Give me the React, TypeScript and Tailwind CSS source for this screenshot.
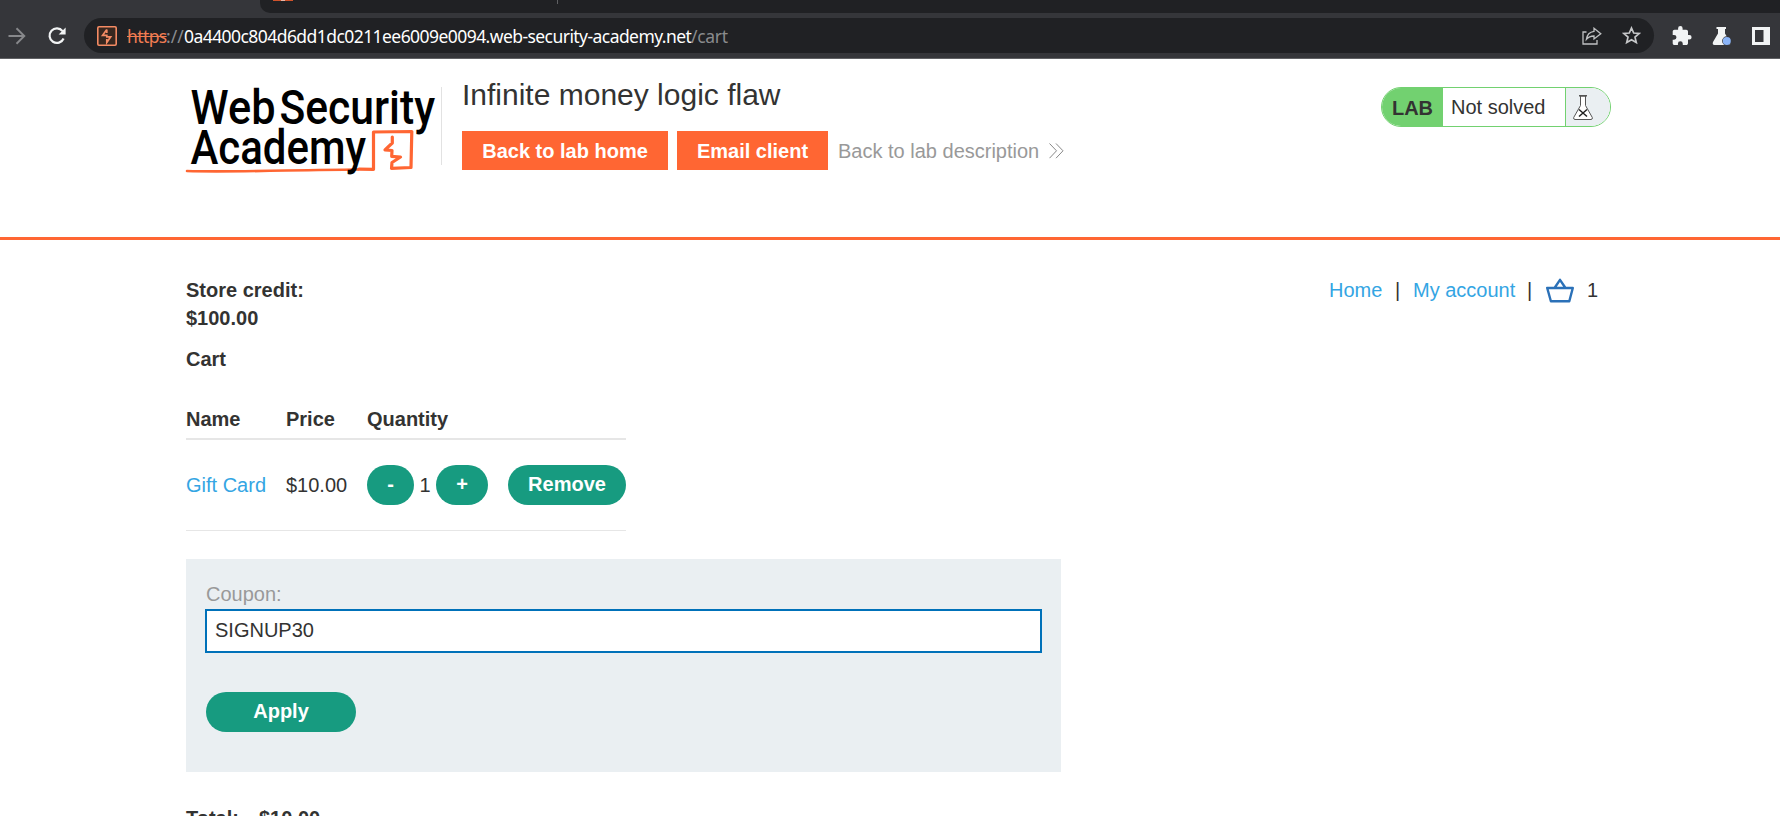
import React from 'react';

function BrowserBar() {
  return (
    <div className="flex h-[59px] flex-col border-b border-[#606164] bg-[#35363a]">
      <div className="flex h-[13px] shrink-0 pl-[260px]">
        <div className="flex flex-1 items-start rounded-bl-[10px] bg-[#202124] pl-[13px]">
          <div className="flex h-px w-5 justify-center bg-[#d0532c]"><span className="h-px w-1 bg-[#e8b5a4]" /></div>
          <div className="ml-[264px] h-1 w-px bg-[#5f6063]" />
        </div>
      </div>
      <div className="mt-[5px] flex h-[35px] items-center">
        <svg className="ml-2 h-[18px] w-[18px]" viewBox="0 0 18 18" fill="none" stroke="#87888b" strokeWidth="1.9">
          <path d="M0.5 9H16M8.5 1.3L16.3 9L8.5 16.7" />
        </svg>
        <svg className="ml-[22px] h-[18px] w-[18px]" viewBox="0 0 18 18">
          <path d="M14.6 4.1A7.3 7.3 0 1 0 15.6 11.5" fill="none" stroke="#f1f3f4" strokeWidth="2.2" />
          <path d="M17.6 0.6V7.6H10.6Z" fill="#f1f3f4" />
        </svg>
        <div className="ml-[18px] flex h-[35px] w-[1570px] items-center rounded-full bg-[#202124] pl-[13px]">
          <svg className="h-5 w-5 shrink-0" viewBox="0 0 20 20" fill="none" stroke="#f48b64">
            <rect x="0.8" y="0.8" width="18.4" height="18.4" rx="1.2" strokeWidth="1.6" fill="#37271f" />
            <path d="M9.8 3.6L5.6 9.3H9.8V10.8H13.7L9.8 16.5V13M9.8 3.6V7" strokeWidth="1.7" />
          </svg>
          <div className="ml-[10px] flex h-6 items-center whitespace-nowrap font-['Noto_Sans',sans-serif] text-[17.5px] leading-6">
            <span className="w-[39px] tracking-[-0.6px] text-[#f07c52] line-through">https</span>
            <span className="w-[18px] text-[#8a8d91]">://</span>
            <span className="w-[507px] tracking-[-0.56px] text-white">0a4400c804d6dd1dc0211ee6009e0094.web-security-academy.net</span>
            <span className="tracking-[-0.3px] text-[#8a8b8d]">/cart</span>
          </div>
          <svg className="ml-auto h-[18px] w-5" viewBox="0 0 20 18" fill="none" stroke="#bfc0c2" strokeWidth="1.3">
            <path d="M4.5 5H1V17H15V13" />
            <path d="M12 1.2L18.8 6.7L12 12V9C8.5 9 6.3 10 4.4 12.3C5 8 7.8 5 12 4.4Z" />
          </svg>
          <svg className="ml-5 mr-[13px] h-[19px] w-[19px]" viewBox="0 0 19 19" fill="none" stroke="#c6c7c9" strokeWidth="1.7">
            <path d="M9.5 2L11.7 7L17.2 7.5L13 11.1L14.3 16.6L9.5 13.7L4.7 16.6L6 11.1L1.8 7.5L7.3 7Z" />
          </svg>
        </div>
        <svg className="ml-[18px] h-[20px] w-[20px]" viewBox="2 1 20 20" fill="#f1f3f4">
          <path d="M20.5 11H19V7c0-1.1-.9-2-2-2h-4V3.500a2.500 2.500 0 0 0-5 0V5H4c-1.100 0-1.990.9-1.990 2v3.800H3.500a2.700 2.700 0 0 1 0 5.400H2V20c0 1.100.9 2 2 2h3.800v-1.500a2.700 2.700 0 0 1 5.400 0V22H17c1.100 0 2-.9 2-2v-4h1.500a2.500 2.500 0 0 0 0-5z" transform="translate(.9 .2) scale(.9)" />
        </svg>
        <svg className="ml-5 h-[18px] w-[20px]" viewBox="0 0 20 18">
          <path d="M4.500 0H14V2H13V6.500L18 15Q19 18 16.500 18H2.500Q0 18 1 15L6 6.500V2H4.500Z" fill="#f1f3f4" />
          <circle cx="14.800" cy="14" r="4.700" fill="#35363a" />
          <circle cx="14.800" cy="14" r="4" fill="#8ab4f8" />
        </svg>
        <svg className="ml-5 h-[18px] w-[18px]" viewBox="0 0 18 18">
          <path fillRule="evenodd" d="M0 0H18V18H0ZM3 3V15H11.500V3Z" fill="#f1f3f4" />
        </svg>
      </div>
    </div>
  );
}

function Logo() {
  return (
    <svg className="h-[94px] w-[256px] shrink-0 overflow-visible" viewBox="186 80 256 94">
      <path d="M187 171C230 172.500 290 170 358 169.500" fill="none" stroke="#ff6633" strokeWidth="2.600" strokeLinecap="round" />
      <g fill="#000" className="font-['Roboto',sans-serif] text-[48px] font-medium">
        <text x="190.500" y="123.500" textLength="85" lengthAdjust="spacingAndGlyphs">Web</text>
        <text x="279.500" y="123.500" textLength="155.500" lengthAdjust="spacingAndGlyphs">Security</text>
        <text x="190.500" y="164" textLength="175.500" lengthAdjust="spacingAndGlyphs">Academy</text>
      </g>
      <g fill="none" stroke="#ff6633" strokeLinejoin="round" strokeLinecap="round">
        <path d="M359 169.200L373.500 169.300L373.500 132L411.800 131.500L411 167.500L391.500 168.300L392 162.500L400.500 157L391.700 156.300L392 150.500L385 149.800L392.300 143V137" strokeWidth="3.200" />
      </g>
    </svg>
  );
}

function LabHeader() {
  return (
    <header className="flex h-[181px] border-b-[3px] border-[#ff6633] pl-[186px] pr-[169px] pt-[21px]">
      <Logo />
      <div className="-ml-px mt-[7px] h-[78px] w-px bg-[#e2e2e2]" />
      <div className="ml-5">
        <h1 className="h-[51px] text-[30px] leading-[30px]">Infinite money logic flaw</h1>
        <div className="flex h-[39px] items-center whitespace-nowrap">
          <a className="flex h-full w-[206px] items-center justify-center bg-[#ff6633] font-bold text-white">Back to lab home</a>
          <a className="ml-[9px] flex h-full w-[151px] items-center justify-center bg-[#ff6633] font-bold text-white">Email client</a>
          <a className="ml-[10px] text-[#999]">Back to lab description</a>
          <svg className="ml-[10px] h-4 w-[15px]" viewBox="0 0 15 16" fill="none" stroke="#888" strokeWidth="1">
            <path d="M0.500 0.500L7.500 7.800L0.500 15.200M7 0.500L14 7.800L7 15.200" />
          </svg>
        </div>
      </div>
      <div className="ml-auto mt-[7px] flex h-10 w-[230px] overflow-hidden rounded-full border border-[#72d170]">
        <span className="flex w-[61px] items-center justify-center bg-[#72d170] pt-[2px] font-bold">LAB</span>
        <span className="w-[122px] pl-[8px] pt-[5px]">Not solved</span>
        <span className="flex flex-1 border-l border-[#72d170] bg-[#eaeff2] pl-[7px] pt-[7px]">
          <svg className="h-[25px] w-5" viewBox="0 0 20 25" fill="none" stroke="#555" strokeWidth="1">
            <path d="M7.500 1V10.500L0.700 22.500Q0.300 24.500 2 24.500H18Q19.700 24.500 19.300 22.500L12.500 10.500V1Z" fill="#fff" />
            <path d="M6 0.700H14" strokeWidth="1.400" />
            <path d="M6 14.500L14 21.500M14 14.500L6 21.500" stroke="#222" strokeWidth="1.500" />
          </svg>
        </span>
      </div>
    </header>
  );
}

function ShopNav() {
  return (
    <nav className="flex h-7 whitespace-nowrap">
      <a className="w-[66px] text-[#34a5e3]">Home</a>
      <span className="w-[18px]">|</span>
      <a className="w-[114px] text-[#34a5e3]">My account</a>
      <span className="w-[19px]">|</span>
      <svg className="mt-[2px] h-[25px] w-7" viewBox="0 0 28 25" fill="none" stroke="#2b71b8" strokeWidth="2.400" strokeLinejoin="round">
        <path d="M1.200 10H26.800L23.300 23.300H4.900ZM8.500 10L14 1.800L19.500 10" />
      </svg>
      <span className="ml-[13px] w-[24px]">1</span>
    </nav>
  );
}

const pill = 'flex h-10 shrink-0 items-center justify-center rounded-full bg-[#179b80] pb-[2px] font-bold text-white';

export default function App() {
  return (
    <div className="h-[816px] w-[1780px] overflow-hidden bg-white font-['Liberation_Sans',Arial,sans-serif] text-[20px] leading-7 text-[#333332]">
      <BrowserBar />
      <LabHeader />
      <main className="pl-[186px] pr-[169px] pt-9">
        <div className="flex items-start justify-between">
          <div className="font-bold">
            <p>Store credit:</p>
            <p>$100.00</p>
          </div>
          <ShopNav />
        </div>
        <h2 className="mt-[13px] font-bold">Cart</h2>
        <div className="mt-8 w-[440px] whitespace-nowrap">
          <div className="flex h-[35px] border-b-2 border-[#e6e6e6] font-bold">
            <span className="w-[100px]">Name</span>
            <span className="w-[81px]">Price</span>
            <span>Quantity</span>
          </div>
          <div className="flex h-[91px] items-center border-b border-[#e6e6e6]">
            <a className="w-[100px] text-[#34a5e3]">Gift Card</a>
            <span className="w-[81px]">$10.00</span>
            <button className={pill + ' w-[47px]'}>-</button>
            <span className="w-[22px] text-center">1</span>
            <button className={pill + ' w-[52px]'}>+</button>
            <button className={pill + ' ml-5 w-[118px]'}>Remove</button>
          </div>
        </div>
        <form className="mt-7 h-[213px] w-[875px] bg-[#eaeff2] px-[19px] pt-[21px]">
          <label className="block h-[29px] pl-px text-[#999]">Coupon:</label>
          <div className="h-11 w-[837px] border-2 border-[#0071b9] bg-white pl-2 pt-[5px]">SIGNUP30</div>
          <button type="button" className={pill + ' ml-px mt-[39px] w-[150px]'}>Apply</button>
        </form>
        <div className="mt-8 flex font-bold">
          <span className="w-[73px]">Total:</span>
          <span>$10.00</span>
        </div>
      </main>
    </div>
  );
}
